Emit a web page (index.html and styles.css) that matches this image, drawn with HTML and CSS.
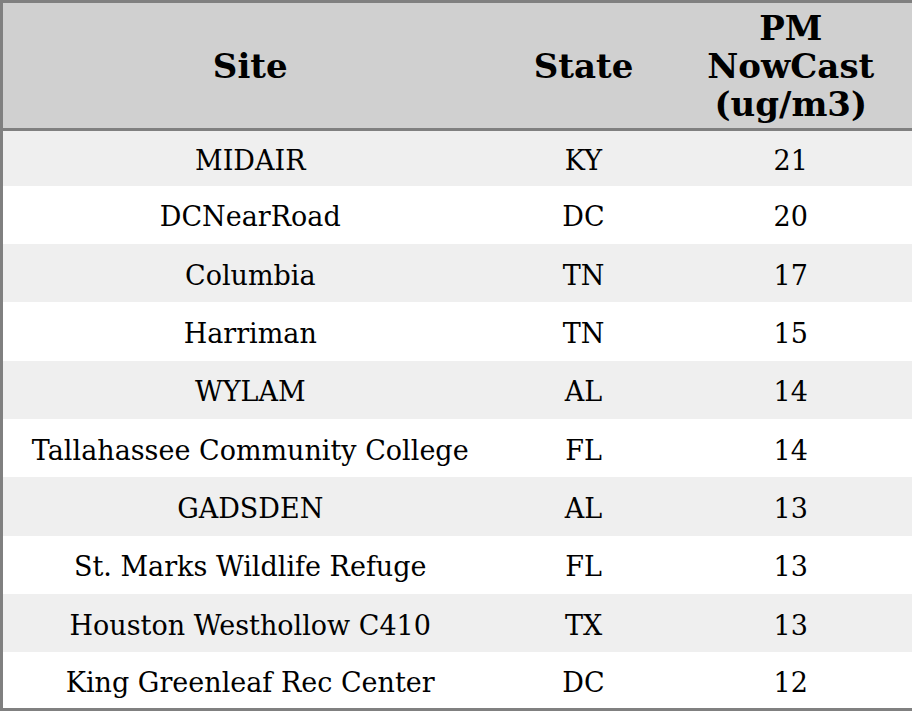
FILE: index.html
```html
<!DOCTYPE html>
<html>
<head>
<meta charset="utf-8">
<link rel="stylesheet" href="styles.css">
</head>
<body>
<table class="aq">
  <colgroup>
    <col class="c-site">
    <col class="c-state">
    <col class="c-pm">
  </colgroup>
  <thead>
    <tr class="head">
      <th>Site</th>
      <th>State</th>
      <th>PM NowCast (ug/m3)</th>
    </tr>
  </thead>
  <tbody>
    <tr class="odd"><td>MIDAIR</td><td>KY</td><td>21</td></tr>
    <tr><td>DCNearRoad</td><td>DC</td><td>20</td></tr>
    <tr class="odd"><td>Columbia</td><td>TN</td><td>17</td></tr>
    <tr><td>Harriman</td><td>TN</td><td>15</td></tr>
    <tr class="odd"><td>WYLAM</td><td>AL</td><td>14</td></tr>
    <tr><td>Tallahassee Community College</td><td>FL</td><td>14</td></tr>
    <tr class="odd"><td>GADSDEN</td><td>AL</td><td>13</td></tr>
    <tr><td>St. Marks Wildlife Refuge</td><td>FL</td><td>13</td></tr>
    <tr class="odd"><td>Houston Westhollow C410</td><td>TX</td><td>13</td></tr>
    <tr><td>King Greenleaf Rec Center</td><td>DC</td><td>12</td></tr>
  </tbody>
</table>
</body>
</html>
```
FILE: styles.css
```css
html, body {
  margin: 0;
  padding: 0;
  background: #ffffff;
}
.aq {
  width: 912px;
  height: 711px;
  border-collapse: collapse;
  table-layout: fixed;
  border: 3px solid #808080;
  font-family: "DejaVu Serif", serif;
  color: #000;
}
.c-site { width: 496px; }
.c-state { width: 172px; }
.c-pm { width: 244px; }
.head {
  background: #d0d0d0;
  height: 128px;
}
.head th {
  font-size: 34px;
  font-weight: bold;
  line-height: 38px;
  text-align: center;
  vertical-align: middle;
  padding: 0 20px;
  border-bottom: 3px solid #808080;
}
tbody tr {
  height: 58px;
}
tbody tr:first-child {
  height: 56px;
}
tbody tr:last-child {
  height: 57px;
}
td {
  font-size: 27px;
  text-align: center;
  vertical-align: middle;
  padding: 4px 0 0;
}
tr.odd {
  background: #efefef;
}
```
